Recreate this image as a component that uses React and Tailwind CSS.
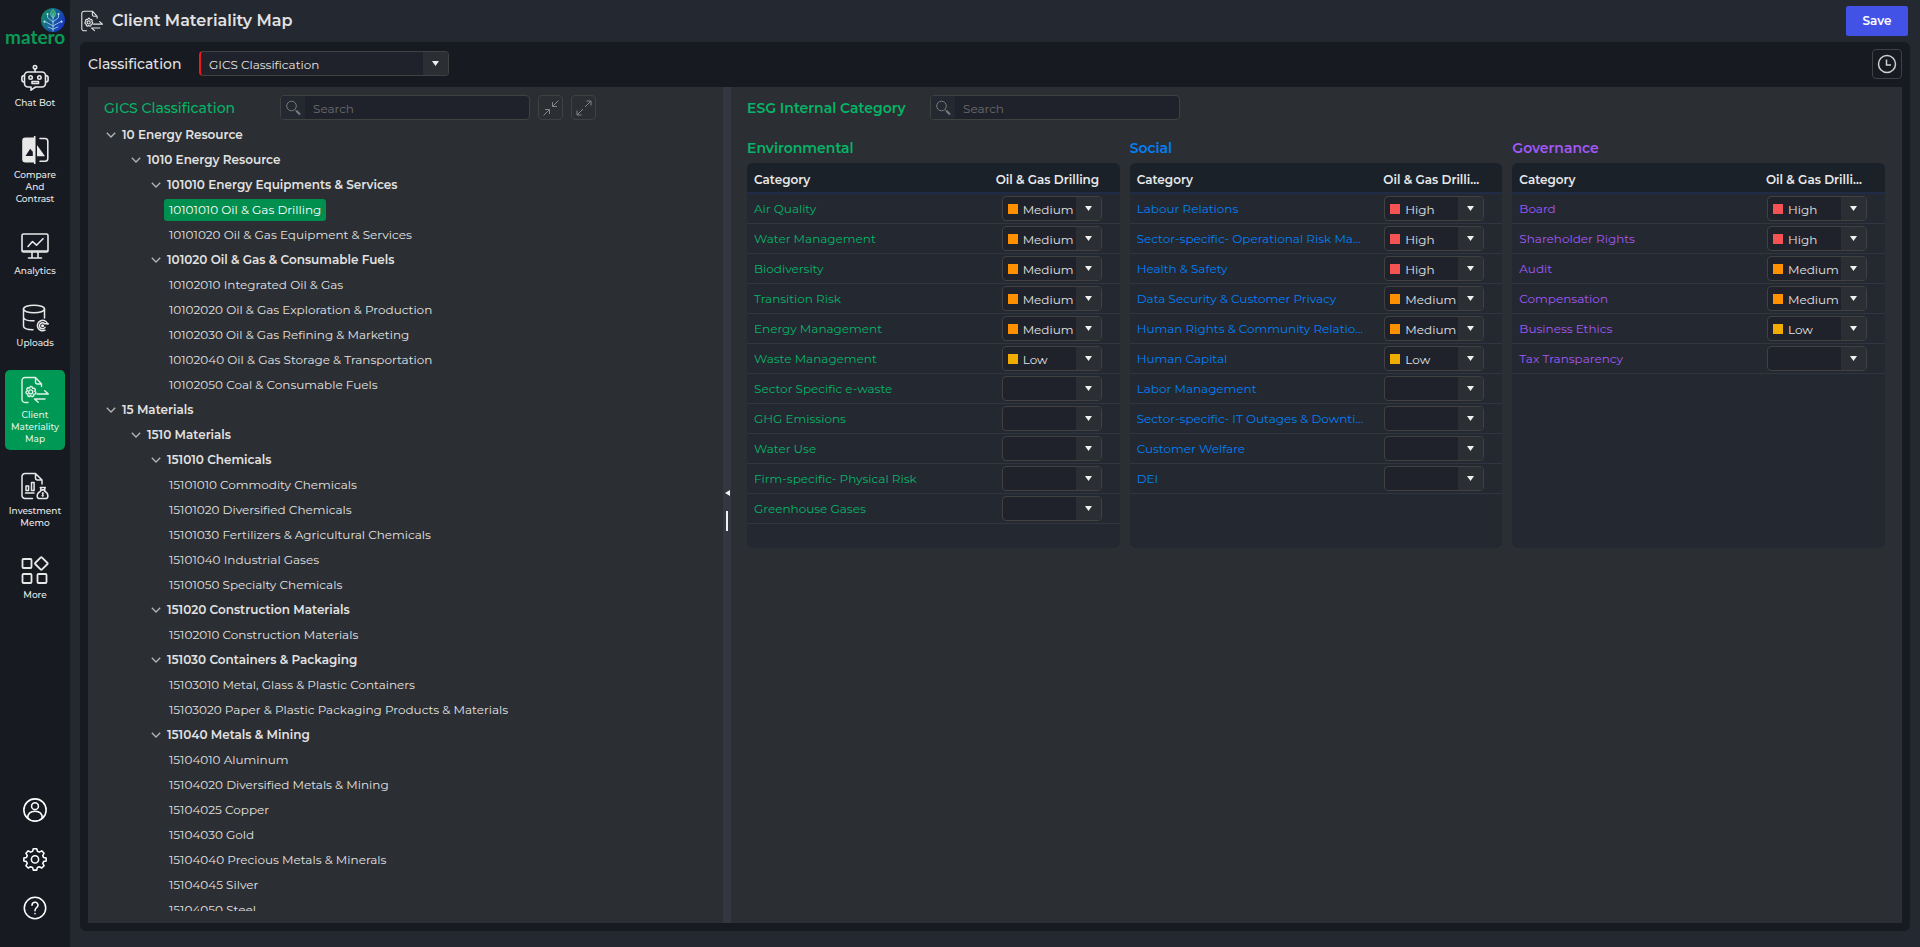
import React, { useState } from 'react';

const LEVELS = {
    High: 'bg-[#f55353]',
    Medium: 'bg-[#ff9100]',
    Low: 'bg-[#f0ad00]'
};

const TREE = [
    [0, '10 Energy Resource'],
    [1, '1010 Energy Resource'],
    [2, '101010 Energy Equipments & Services'],
    [3, '10101010 Oil & Gas Drilling'],
    [3, '10101020 Oil & Gas Equipment & Services'],
    [2, '101020 Oil & Gas & Consumable Fuels'],
    [3, '10102010 Integrated Oil & Gas'],
    [3, '10102020 Oil & Gas Exploration & Production'],
    [3, '10102030 Oil & Gas Refining & Marketing'],
    [3, '10102040 Oil & Gas Storage & Transportation'],
    [3, '10102050 Coal & Consumable Fuels'],
    [0, '15 Materials'],
    [1, '1510 Materials'],
    [2, '151010 Chemicals'],
    [3, '15101010 Commodity Chemicals'],
    [3, '15101020 Diversified Chemicals'],
    [3, '15101030 Fertilizers & Agricultural Chemicals'],
    [3, '15101040 Industrial Gases'],
    [3, '15101050 Specialty Chemicals'],
    [2, '151020 Construction Materials'],
    [3, '15102010 Construction Materials'],
    [2, '151030 Containers & Packaging'],
    [3, '15103010 Metal, Glass & Plastic Containers'],
    [3, '15103020 Paper & Plastic Packaging Products & Materials'],
    [2, '151040 Metals & Mining'],
    [3, '15104010 Aluminum'],
    [3, '15104020 Diversified Metals & Mining'],
    [3, '15104025 Copper'],
    [3, '15104030 Gold'],
    [3, '15104040 Precious Metals & Minerals'],
    [3, '15104045 Silver'],
    [3, '15104050 Steel']
];

const INDENT = ['pl-[18px]', 'pl-[43px]', 'pl-[63px]', 'pl-[76px]'];

const SECTIONS = [
    {
        title: 'Environmental',
        color: 'text-[#04b568]',
        valueCol: 'w-[124px]',
        rows: [
            ['Air Quality', 'Medium'],
            ['Water Management', 'Medium'],
            ['Biodiversity', 'Medium'],
            ['Transition Risk', 'Medium'],
            ['Energy Management', 'Medium'],
            ['Waste Management', 'Low'],
            ['Sector Specific e-waste', ''],
            ['GHG Emissions', ''],
            ['Water Use', ''],
            ['Firm-specific- Physical Risk', ''],
            ['Greenhouse Gases', '']
        ]
    },
    {
        title: 'Social',
        color: 'text-[#0080f8]',
        valueCol: 'w-[119px]',
        rows: [
            ['Labour Relations', 'High'],
            ['Sector-specific- Operational Risk Management', 'High'],
            ['Health & Safety', 'High'],
            ['Data Security & Customer Privacy', 'Medium'],
            ['Human Rights & Community Relationships', 'Medium'],
            ['Human Capital', 'Low'],
            ['Labor Management', ''],
            ['Sector-specific- IT Outages & Downtime', ''],
            ['Customer Welfare', ''],
            ['DEI', '']
        ]
    },
    {
        title: 'Governance',
        color: 'text-[#a259f7]',
        valueCol: 'w-[119px]',
        rows: [
            ['Board', 'High'],
            ['Shareholder Rights', 'High'],
            ['Audit', 'Medium'],
            ['Compensation', 'Medium'],
            ['Business Ethics', 'Low'],
            ['Tax Transparency', '']
        ]
    }
];

const Icon = ({ className = 'size-7', children, width = 1.6 }) => (
    <svg
        viewBox="0 0 28 28"
        className={className}
        fill="none"
        stroke="currentColor"
        strokeWidth={width}
        strokeLinecap="round"
        strokeLinejoin="round"
        aria-hidden="true"
    >
        {children}
    </svg>
);

const ChatBotIcon = () => (
    <Icon>
        <circle cx="14" cy="3.2" r="1.7" />
        <path d="M14 5v3M7 8h14a3.5 3.5 0 0 1 3.5 3.5v8A3.5 3.5 0 0 1 21 23h-6.5L10 26.2V23H7a3.5 3.5 0 0 1-3.5-3.5v-8A3.5 3.5 0 0 1 7 8z" />
        <path d="M3 11.5Q.9 11.8.9 13.5v2.5Q.9 17.8 3 18M25 11.5q2.1.3 2.1 2v2.5q0 1.8-2.1 2" />
        <circle cx="9.6" cy="13.5" r="1.7" />
        <circle cx="18.4" cy="13.5" r="1.7" />
        <path d="M11 17.5h6.5v2H11z" />
    </Icon>
);

const CompareIcon = () => (
    <Icon>
        <path d="M13.5 1.5H4.5A3.3 3.3 0 0 0 1.2 4.8v18.4a3.3 3.3 0 0 0 3.3 3.3h9z" fill="currentColor" stroke="none" />
        <path d="M13.7.5v27" />
        <path d="M4.5 20h7.3v-4.2l-2.6-3z" fill="#171a21" stroke="none" />
        <path d="M16 9l8 11.2h-8z" fill="currentColor" stroke="none" />
        <path d="M19 2.5h5a2.8 2.8 0 0 1 2.8 2.8v17.2a2.8 2.8 0 0 1-2.8 2.8h-5" />
    </Icon>
);

const AnalyticsIcon = () => (
    <Icon>
        <rect x="1" y="2" width="26" height="18" rx="1.5" />
        <path d="M1.5 19h25M11 20.5v5M17 20.5v5M7.5 26h13" />
        <path d="M7 14.5l4.5-5 4 3.7 6.5-6.5" />
    </Icon>
);

const UploadsIcon = () => (
    <Icon width={1.5}>
        <ellipse cx="13" cy="5" rx="10.5" ry="3.8" />
        <path d="M2.5 5v17c0 2.2 4 3.7 9.5 3.8M23.5 5v9M2.5 13.5c.8 2.2 5.5 3.5 10.5 3.3" />
        <path d="M24 26.2a5.2 5.2 0 1 1 2.6-6.2M27.3 19.8h-3.6a3 3 0 1 0 .3 3.6" />
        <circle cx="21.6" cy="21.8" r=".8" />
    </Icon>
);

const MaterialityIcon = ({ className }) => (
    <Icon className={className} width={1.4}>
        <path d="M7 26.5H4A3 3 0 0 1 1 23.5v-19a3 3 0 0 1 3-3h10.5l6 6.5v2.5M14.5 1.5V6a2 2 0 0 0 2 2h4" />
        <path d="M9.5 10.4l1.5.3.7 1.7 1.8-.1.9 1.3-.7 1.6 1.2 1-.4 1.6-1.7.5-.2 1.7-1.5.7-1.4-1-1.5 1-1.4-.9v-1.7l-1.6-.7-.2-1.5 1.3-1.2-.6-1.6 1-1.3 1.8.2z" />
        <circle cx="9.7" cy="15.9" r="2" />
        <path d="M16 18h11.3l-3.6-3.3M24 23H13.5l3.7 3.3" />
    </Icon>
);

const MemoIcon = () => (
    <Icon width={1.5}>
        <path d="M11.5 26.5H4A3 3 0 0 1 1 23.5v-19a3 3 0 0 1 3-3h10.5l6.5 6.5v4M14.5 1.5V6a2 2 0 0 0 2 2H21" />
        <path d="M5 14h2.6v4.5H5zM10.5 10.5h2.6v8h-2.6zM4.5 21h8.5" />
        <path d="M19.5 18h4.5l-.4 1.2c2 1 3.3 2.8 3.3 4.8 0 1.8-1 2.6-2.5 2.6h-5.6c-1.6 0-2.6-.9-2.6-2.6 0-2 1.500-3.900 3.500-4.800zM19.300 15.500h5l-1 2.300h-3z" />
        <path d="M22.8 21.2c-1.8-.7-2.3.9-1 1.3s1 1.9-1 1.2M21.8 20.4v4.2" strokeWidth="1" />
    </Icon>
);

const MoreIcon = () => (
    <Icon width={1.8}>
        <rect x="1.5" y="3" width="9" height="9" rx="1" />
        <rect x="1.5" y="18" width="9" height="9" rx="1" />
        <rect x="16.5" y="18" width="9" height="9" rx="1" />
        <path d="M20.8 1.3l5.7 5.7a.7.7 0 0 1 0 1l-5.7 5.7a.7.7 0 0 1-1 0L14.2 8a.7.7 0 0 1 0-1l5.6-5.7a.7.7 0 0 1 1 0z" />
    </Icon>
);

const Logo = () => (
    <a href="#home" aria-label="matero" className="flex w-full flex-col items-end px-[5px] pt-2">
        <svg viewBox="0 0 24 24" className="size-6" aria-hidden="true">
            <defs>
                <linearGradient id="globe" x1="0" y1="0.2" x2="1" y2="0.7">
                    <stop offset="0" stopColor="#11905c" />
                    <stop offset="0.5" stopColor="#17609b" />
                    <stop offset="1" stopColor="#1a2fc9" />
                </linearGradient>
            </defs>
            <circle cx="12" cy="12" r="12" fill="url(#globe)" />
            <path d="M12 1.5c3 2.5 3 6 0 8.5-3-2.5-3-6 0-8.5z" fill="#17925a" stroke="#7fd6a8" strokeWidth=".8" />
            <g fill="none" stroke="#9cc6e8" strokeWidth=".9" strokeLinecap="round">
                <path d="M12 5v18M12 14L6.5 9.5V6M12 14l5.5-4.5V6M12 18l-7-4H3M12 18l7-4h2M12 21l-5-2M12 21l5-2" />
            </g>
            <g fill="#c7e2f3">
                <circle cx="6.5" cy="6" r="1" />
                <circle cx="17.5" cy="6" r="1" />
                <circle cx="3.5" cy="13.5" r="1" />
                <circle cx="20.5" cy="13.5" r="1" />
            </g>
        </svg>
        <span className="w-full pb-1 text-center font-['Lato',sans-serif] text-[19px] leading-[10px] font-bold text-[#0a9a57]">matero</span>
    </a>
);

const NAV = [
    { label: 'Chat Bot', icon: ChatBotIcon },
    { label: 'Compare And Contrast', icon: CompareIcon },
    { label: 'Analytics', icon: AnalyticsIcon },
    { label: 'Uploads', icon: UploadsIcon },
    { label: 'Client Materiality Map', icon: MaterialityIcon, active: true },
    { label: 'Investment Memo', icon: MemoIcon },
    { label: 'More', icon: MoreIcon }
];

const Sidebar = () => (
    <aside className="flex w-[70px] shrink-0 flex-col items-center bg-[#171a21] text-white">
        <Logo />
        <nav className="mt-3 flex w-full flex-col gap-4 px-[5px]">
            {NAV.map(({ label, icon: NavIcon, active }) => (
                <a
                    key={label}
                    href="#nav"
                    className={`flex flex-col items-center gap-[5px] rounded-[5px] px-[3px] pt-1.5 pb-[5px] text-center text-[9px] leading-3 font-medium ${active ? 'bg-[#009855] text-[#dff3e8]' : 'text-[#e8e8e8]'}`}
                >
                    <NavIcon />
                    <span>{label}</span>
                </a>
            ))}
        </nav>
        <div className="mt-auto flex flex-col gap-[25px] pb-[27px]">
            <button type="button" aria-label="Profile">
                <Icon className="size-6" width={1.8}>
                    <circle cx="14" cy="14" r="13" />
                    <circle cx="14" cy="9.5" r="4" />
                    <path d="M5.5 23.5c0-5.5 3.5-8 8.5-8s8.5 2.5 8.5 8" />
                </Icon>
            </button>
            <button type="button" aria-label="Settings">
                <Icon className="size-6" width={1.8}>
                    <path d="M12 2h4l.8 3 2.3 1 2.8-1.5 2.7 2.7L23 10l1 2.2 3 .6v3.4l-3 .8-1 2.2 1.6 2.6-2.7 2.7-2.8-1.5-2.3 1L16 27h-4l-.8-3-2.3-1-2.8 1.5-2.7-2.7L5 19.2 4 17l-3-.8v-3.4l3-.6L5 10 3.4 7.2l2.7-2.7L8.9 6l2.3-1z" />
                    <circle cx="14" cy="14.5" r="4.2" />
                </Icon>
            </button>
            <button type="button" aria-label="Help">
                <Icon className="size-6" width={1.8}>
                    <circle cx="14" cy="14" r="12.5" />
                    <path d="M10.5 10.8c.3-4.8 7.5-4.3 7 .2-.3 2.5-3.5 2.7-3.5 6.2M14 20.5v.3" />
                </Icon>
            </button>
        </div>
    </aside>
);

const Arrow = () => (
    <span className="pointer-events-none absolute inset-y-0 right-0 flex w-[25px] items-center justify-center bg-[#2b2e32]">
        <svg viewBox="0 0 7 5" className="h-[5px] w-[7px]" aria-hidden="true">
            <path d="M0 0h7L3.5 5z" fill="#f0f0f0" />
        </svg>
    </span>
);

const LevelSelect = ({ label, initial }) => {
    const [level, setLevel] = useState(initial);

    return (
        <div className="relative ml-auto h-[25px] w-[100px] overflow-hidden rounded border border-[#414141] bg-[#20222b]">
            {level && <span className={`pointer-events-none absolute top-[7px] left-[5px] h-2.5 w-2.5 ${LEVELS[level]}`} />}
            <select
                aria-label={label}
                value={level}
                onChange={(e) => setLevel(e.target.value)}
                className="block h-full w-full appearance-none pt-0.5 pr-6 pl-5 text-xs text-[#e2e2e2] outline-none"
            >
                <option value=""></option>
                <option>High</option>
                <option>Medium</option>
                <option>Low</option>
            </select>
            <Arrow />
        </div>
    );
};

const SearchBox = ({ label }) => (
    <label className="flex h-[25px] w-[250px] items-center overflow-hidden rounded border border-[#414141] bg-[#20222b]">
        <span className="flex h-full w-6 shrink-0 items-center justify-center bg-[#242831] text-[#7b7b7b]">
            <svg viewBox="0 0 16 16" className="size-4" fill="none" stroke="currentColor" aria-hidden="true">
                <circle cx="6.5" cy="6" r="4.8" />
                <path d="M10 9.5l1.5 1.5" />
                <path d="M11.3 10.8l3.7 3.7" strokeWidth="2" />
            </svg>
        </span>
        <input
            type="text"
            aria-label={label}
            placeholder="Search"
            className="min-w-0 flex-1 px-2 pt-0.5 text-xs text-[#e2e2e2] placeholder-[#6b6b6b] outline-none"
        />
    </label>
);

const Chevron = () => (
    <svg viewBox="0 0 10 6" className="h-1.5 w-2.5 shrink-0" fill="none" stroke="#b5b5b5" strokeWidth="1.3" aria-hidden="true">
        <path d="M.8.8L5 5 9.2.8" />
    </svg>
);

const ClassificationTree = () => {
    const [selected, setSelected] = useState('10101010 Oil & Gas Drilling');

    return (
        <ul className="min-h-0 flex-1 overflow-hidden text-xs text-[#e2e2e2]">
            {TREE.map(([level, name]) => (
                <li key={name} className={`flex h-[25px] items-center ${INDENT[level]}`}>
                    {level < 3 ? (
                        <button type="button" className="flex items-center gap-1.5 font-semibold">
                            <Chevron />
                            {name}
                        </button>
                    ) : (
                        <button
                            type="button"
                            onClick={() => setSelected(name)}
                            className={`mt-px h-[22px] rounded-[3px] px-[5px] ${selected === name ? 'bg-[#008f4f] text-white' : ''}`}
                        >
                            {name}
                        </button>
                    )}
                </li>
            ))}
        </ul>
    );
};

const CategoryTable = ({ title, color, valueCol, rows }) => (
    <section className="flex min-w-0 flex-col">
        <h3 className={`h-[30px] text-sm leading-[30px] font-semibold ${color}`}>{title}</h3>
        <div className="flex-1 overflow-hidden rounded-md bg-[#242831] pb-6">
            <table className="w-full table-fixed border-separate border-spacing-0 text-left text-xs">
                <thead>
                    <tr className="h-[31px] bg-[#1b2129] text-[#e8e8e8]">
                        <th className="border-b-2 border-[#202b47] pt-1 pl-[7px] font-semibold">Category</th>
                        <th className={`truncate border-b-2 border-[#202b47] pt-1 pr-[18px] font-semibold ${valueCol}`}>Oil &amp; Gas Drilling</th>
                    </tr>
                </thead>
                <tbody>
                    {rows.map(([name, level]) => (
                        <tr key={name} className="h-[30px]">
                            <td className={`truncate border-b border-[#31353f] pr-[18px] pl-[7px] ${color}`}>{name}</td>
                            <td className="border-b border-[#31353f] pr-[18px]">
                                <LevelSelect label={name} initial={level} />
                            </td>
                        </tr>
                    ))}
                </tbody>
            </table>
        </div>
    </section>
);

const iconButton = 'flex size-[25px] items-center justify-center rounded border border-[#414141] text-[#858585]';

const App = () => (
    <div className="flex h-screen overflow-hidden bg-[#242831] font-['Montserrat','Inter',sans-serif] text-[#e2e2e2]">
        <Sidebar />
        <main className="flex min-w-0 flex-1 flex-col pr-2.5 pb-4 pl-2.5">
            <header className="flex h-[42px] shrink-0 items-center pr-0.5">
                <MaterialityIcon className="ml-px size-[22px]" />
                <h1 className="ml-[9px] text-base font-semibold">Client Materiality Map</h1>
                <button type="button" className="ml-auto h-[30px] w-[62px] rounded-xs bg-[#4252e6] text-xs font-semibold text-white">
                    Save
                </button>
            </header>

            <div className="flex min-h-0 flex-1 flex-col rounded-md bg-[#171a21] px-2 pb-2">
                <div className="flex h-[45px] shrink-0 items-center pb-0.5">
                    <label htmlFor="classification" className="w-[111px] text-sm font-medium">Classification</label>
                    <div className="relative h-[25px] w-[250px] overflow-hidden rounded border border-l-2 border-[#414141] border-l-[#f01818] bg-[#20222b]">
                        <select id="classification" className="block h-full w-full appearance-none pt-0.5 pl-2 text-xs outline-none">
                            <option>GICS Classification</option>
                        </select>
                        <Arrow />
                    </div>
                    <button type="button" aria-label="History" className="ml-auto flex size-[30px] items-center justify-center rounded border border-[#414141]">
                        <svg viewBox="0 0 20 20" className="size-5" fill="none" stroke="#d0d0d0" strokeWidth="1.5" aria-hidden="true">
                            <circle cx="10" cy="10" r="8.5" />
                            <path d="M9.5 5.5v5.5h4.5" />
                        </svg>
                    </button>
                </div>

                <div className="flex min-h-0 flex-1 bg-[#2b2e32]">
                    <section className="flex w-[635px] shrink-0 flex-col pb-3">
                        <div className="flex h-[35px] shrink-0 items-center gap-2 pt-2 pb-0.5 pl-4">
                            <h2 className="w-[168px] text-sm font-medium text-[#04b568]">GICS Classification</h2>
                            <SearchBox label="Search classification" />
                            <button type="button" aria-label="Collapse all" className={iconButton}>
                                <svg viewBox="0 0 16 16" className="size-4" fill="none" stroke="currentColor" aria-hidden="true">
                                    <path d="M15.5.5L9.5 6.5M9.5 2v4.5H14M.5 15.5l6-6M2 9.5h4.5V14" />
                                </svg>
                            </button>
                            <button type="button" aria-label="Expand all" className={iconButton}>
                                <svg viewBox="0 0 16 16" className="size-4" fill="none" stroke="currentColor" aria-hidden="true">
                                    <path d="M9 7l6-6M10.5 1H15v4.5M7 9l-6 6M1 10.5V15h4.5" />
                                </svg>
                            </button>
                        </div>
                        <ClassificationTree />
                    </section>

                    <div className="flex w-2 shrink-0 flex-col items-center justify-center gap-[15px] bg-[#343741] pt-2.5">
                        <svg viewBox="0 0 5 6" className="h-1.5 w-[5px]" aria-hidden="true">
                            <path d="M5 0v6L0 3z" fill="#f0f0f0" />
                        </svg>
                        <span className="h-5 w-0.5 bg-[#f0f0f0]" />
                    </div>

                    <section className="min-w-0 flex-1 pr-[17px] pl-4">
                        <div className="flex h-[46px] items-center pb-[5px]">
                            <h2 className="w-[183px] text-sm font-semibold text-[#04b568]">ESG Internal Category</h2>
                            <SearchBox label="Search category" />
                        </div>
                        <div className="grid grid-cols-3 gap-2.5">
                            {SECTIONS.map((section) => (
                                <CategoryTable key={section.title} {...section} />
                            ))}
                        </div>
                    </section>
                </div>
            </div>
        </main>
    </div>
);

export default App;
